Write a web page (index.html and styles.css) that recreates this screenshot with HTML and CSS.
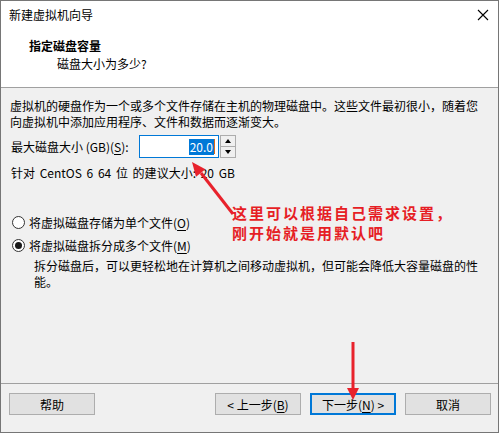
FILE: index.html
```html
<!DOCTYPE html>
<html lang="zh-CN">
<head>
  <meta charset="UTF-8" />
  <title>新建虚拟机向导</title>
  <link rel="stylesheet" href="styles.css">
</head>
<body>
  <div class="window">
    <div class="titlebar">
      <span class="title">新建虚拟机向导</span>
      <svg class="close" width="12" height="12" viewBox="0 0 12 12">
        <path d="M1 1 L11 11 M11 1 L1 11" stroke="#000" stroke-width="1.1" fill="none" />
      </svg>
    </div>

    <div class="header">
      <div class="header-title">指定磁盘容量</div>
      <div class="header-sub">磁盘大小为多少?</div>
    </div>

    <div class="content">
      <p class="intro">虚拟机的硬盘作为一个或多个文件存储在主机的物理磁盘中。这些文件最初很小，随着您向虚拟机中添加应用程序、文件和数据而逐渐变大。</p>

      <div class="size-row">
        <span class="size-label">最大磁盘大小 (GB)(<u>S</u>):</span>
        <div class="spin-input"><span class="selected">20.0</span><span class="caret"></span></div>
        <div class="spin-buttons">
          <div class="spin-btn"><span class="tri-up"></span></div>
          <div class="spin-btn"><span class="tri-down"></span></div>
        </div>
      </div>

      <div class="recommend">针对 CentOS 6 64 位 的建议大小: 20 GB</div>

      <div class="options">
        <div class="radio-row">
          <span class="radio"></span>
          <span>将虚拟磁盘存储为单个文件(<u>O</u>)</span>
        </div>
        <div class="radio-row">
          <span class="radio checked"></span>
          <span>将虚拟磁盘拆分成多个文件(<u>M</u>)</span>
        </div>
        <p class="note">拆分磁盘后，可以更轻松地在计算机之间移动虚拟机，但可能会降低大容量磁盘的性能。</p>
      </div>
    </div>

    <div class="footer">
      <button class="btn">帮助</button>
      <div class="spacer"></div>
      <button class="btn">&lt; 上一步(<u>B</u>)</button>
      <button class="btn default">下一步(<u>N</u>) &gt;</button>
      <button class="btn">取消</button>
    </div>

    <!-- red annotations drawn on top of the screenshot -->
    <div class="note-red">
      <div>这里可以根据自己需求设置，</div>
      <div>刚开始就是用默认吧</div>
    </div>
    <svg class="arrows" width="499" height="433" viewBox="0 0 499 433">
      <line x1="233" y1="214" x2="201" y2="173" stroke="#e8222c" stroke-width="3" />
      <polygon points="192,162 205.4,169.3 196,176.7" fill="#e8222c" />
      <line x1="353" y1="342" x2="353" y2="389" stroke="#e8222c" stroke-width="3" />
      <polygon points="347,388 359,388 353,400" fill="#e8222c" />
    </svg>
  </div>
</body>
</html>
```

FILE: styles.css
```css
body {
  margin: 0;
  font-family: "Noto Sans CJK SC", "Noto Sans", sans-serif;
  font-size: 12px;
  color: #000;
  background: #fff;
}
u {
  text-decoration: underline;
  text-underline-offset: 2px;
}
.window {
  position: relative;
  width: 499px;
  height: 433px;
  box-sizing: border-box;
  border: 1px solid #767676;
  display: flex;
  flex-direction: column;
  background: #f0f0f0;
}
.titlebar {
  height: 28px;
  background: #fff;
  display: flex;
  align-items: center;
  justify-content: space-between;
  padding: 0 9px 0 8px;
}
.title {
  line-height: 16px;
}
.close {
  display: block;
}
.header {
  height: 58px;
  background: #fff;
  border-bottom: 1px solid #a0a0a0;
  box-sizing: content-box;
}
.header-title {
  font-weight: bold;
  line-height: 16px;
  padding: 9px 0 0 28px;
}
.header-sub {
  line-height: 16px;
  padding: 2px 0 0 56px;
}
.content {
  flex: 1;
  padding: 10px 10px 0 9px;
}
.intro {
  margin: 0;
  line-height: 16px;
}
.size-row {
  display: flex;
  align-items: center;
  margin-top: 5px;
  height: 23px;
}
.size-label {
  width: 128px;
  padding-left: 1px;
  line-height: 16px;
}
.spin-input {
  width: 80px;
  height: 23px;
  box-sizing: border-box;
  border: 1px solid #0078d7;
  background: #fff;
  display: flex;
  align-items: center;
  justify-content: flex-end;
  padding-right: 3px;
}
.selected {
  background: #0078d7;
  color: #fff;
  line-height: 16px;
  padding: 0 1px;
}
.caret {
  width: 1px;
  height: 15px;
  background: #d86a1a;
}
.spin-buttons {
  width: 16px;
  height: 23px;
  box-sizing: border-box;
  margin-left: 1px;
  border: 1px solid #adadad;
  background: #f0f0f0;
  display: flex;
  flex-direction: column;
}
.spin-btn {
  flex: 1;
  display: flex;
  align-items: center;
  justify-content: center;
}
.spin-btn + .spin-btn {
  border-top: 1px solid #adadad;
}
.tri-up {
  border-left: 3px solid transparent;
  border-right: 3px solid transparent;
  border-bottom: 4px solid #000;
}
.tri-down {
  border-left: 3px solid transparent;
  border-right: 3px solid transparent;
  border-top: 4px solid #000;
}
.recommend {
  margin-top: 7px;
  padding-left: 1px;
  line-height: 16px;
  word-spacing: 2px;
}
.options {
  margin-top: 33px;
}
.radio-row {
  display: flex;
  align-items: center;
  gap: 4px;
  width: fit-content;
  height: 16px;
  margin-top: 7px;
  padding-left: 2px;
}
.radio {
  width: 13px;
  height: 13px;
  box-sizing: border-box;
  border: 1px solid #333;
  border-radius: 50%;
  background: #fff;
  display: flex;
  align-items: center;
  justify-content: center;
}
.radio.checked::after {
  content: "";
  width: 7px;
  height: 7px;
  border-radius: 50%;
  background: #1a1a1a;
}
.note {
  margin: 5px 0 0;
  padding-left: 24px;
  line-height: 16px;
}
.footer {
  height: 39px;
  border-top: 1px solid #a0a0a0;
  display: flex;
  align-items: flex-start;
  gap: 9px;
  padding: 9px 7px 0 8px;
}
.spacer {
  flex: 1;
}
.btn {
  width: 86px;
  height: 22px;
  box-sizing: border-box;
  border: 1px solid #adadad;
  background: #e1e1e1;
  font-family: inherit;
  font-size: 12px;
  padding: 0;
  color: #000;
}
.btn.default {
  border: 2px solid #0078d7;
}
.note-red {
  position: absolute;
  left: 231px;
  top: 202px;
  color: #e61e25;
  font-weight: bold;
  font-size: 15px;
  line-height: 20px;
  letter-spacing: 2px;
}
.arrows {
  position: absolute;
  left: -1px;
  top: -1px;
  pointer-events: none;
}
```
